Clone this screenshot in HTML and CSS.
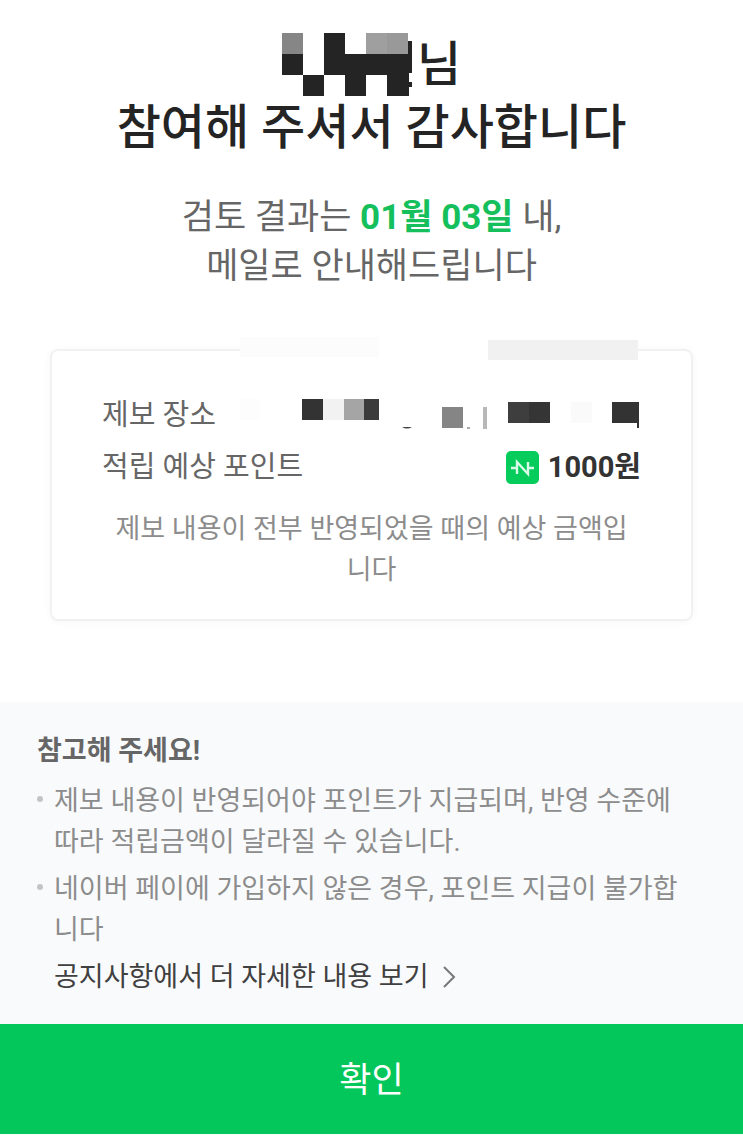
FILE: index.html
```html
<!DOCTYPE html>
<html lang="ko">
<head>
  <meta charset="UTF-8">
  <meta name="viewport" content="width=device-width, initial-scale=1">
  <title>참여해 주셔서 감사합니다</title>
  <link rel="stylesheet" href="styles.css">
</head>
<body>
  <main class="result">
    <h1 class="title">
      <span class="user">
        <svg class="user-mask" width="135" height="63" viewBox="0 0 135 63" shape-rendering="crispEdges" aria-hidden="true">
          <g fill="#242424">
            <path d="M0 21h21v21H0zM21 42h21v21H21zM42 0h21v21h64v42h-22V42H84v21H63V42H42z"/>
            <path d="M126 8h4v32h-4zM126 49h4v5h-4z"/>
          </g>
          <path d="M0 0h21v21H0z" fill="#868686"/>
          <path d="M84 0h21v21H84z" fill="#9f9f9f"/>
          <path d="M105 0h21v21h-21z" fill="#999"/>
        </svg>님
      </span>
      참여해 주셔서 감사합니다
    </h1>
    <p class="schedule">검토 결과는 <strong>01월 03일</strong> 내,<br>메일로 안내해드립니다</p>

    <section class="card">
      <dl class="summary">
        <div class="row">
          <dt>제보 장소</dt>
          <dd></dd>
        </div>
        <div class="row">
          <dt>적립 예상 포인트</dt>
          <dd class="point">
            <svg width="33" height="33" viewBox="0 0 33 33" aria-hidden="true">
              <rect width="33" height="33" rx="5" fill="#06cc5c"/>
              <path d="M5 17h6M22 17h6M11 23V11l11 12V11" fill="none" stroke="#d9fbe8" stroke-width="2.4"/>
            </svg>
            1000원
          </dd>
        </div>
      </dl>
      <p class="card-note">제보 내용이 전부 반영되었을 때의 예상 금액입니다</p>

      <!-- hidden place name -->
      <svg class="place-mask" width="400" height="93" viewBox="0 0 400 93" shape-rendering="crispEdges" aria-hidden="true">
        <path d="M139 8h109v10H139z" fill="#fff"/>
        <path d="M0 0h139v20H0z" fill="#fcfcfc"/>
        <path d="M248 3h150v20H248z" fill="#f1f1f1"/>
        <path d="M0 62h20v21H0z" fill="#fdfdfd"/>
        <path d="M331 65h21v21h-21z" fill="#fafafa"/>
        <path d="M62 62h21v21H62z" fill="#333"/>
        <path d="M83 62h21v21H83z" fill="#f2f2f2"/>
        <path d="M104 62h20v21h-20z" fill="#a5a5a5"/>
        <path d="M124 62h15v21h-15z" fill="#3b3b3b"/>
        <path d="M162 90q5 3 10 0z" fill="#444" shape-rendering="auto"/>
        <path d="M202 70h21v21h-21z" fill="#858585"/>
        <path d="M227 90h3v2h-3z" fill="#aaa"/>
        <path d="M243 70h4v22h-4z" fill="#b8b8b8"/>
        <path d="M268 65h21v21h-21z" fill="#3e3e3e"/>
        <path d="M289 65h21v21h-21z" fill="#353535"/>
        <path d="M372 65h27v26h-2v-5h-25z" fill="#333"/>
      </svg>
    </section>
  </main>

  <section class="notice">
    <h2>참고해 주세요!</h2>
    <ul>
      <li>제보 내용이 반영되어야 포인트가 지급되며, 반영 수준에 따라 적립금액이 달라질 수 있습니다.</li>
      <li>네이버 페이에 가입하지 않은 경우, 포인트 지급이 불가합니다</li>
    </ul>
    <a class="more" href="#">
      공지사항에서 더 자세한 내용 보기
      <svg width="14" height="24" viewBox="0 0 14 24" aria-hidden="true">
        <path d="M2 1l10 10L2 21" fill="none" stroke="#777" stroke-width="2"/>
      </svg>
    </a>
  </section>

  <button class="confirm" type="button">확인</button>
</body>
</html>
```

FILE: styles.css
```css
* {
  box-sizing: border-box;
}

body {
  margin: 0;
  font-family: Roboto, "Noto Sans CJK KR", sans-serif;
  font-size: 27px;
  line-height: 41px;
  color: #8c8c8c;
  background: #fff;
}

h1, h2, p, ul, dl, dd {
  margin: 0;
  padding: 0;
}

.result {
  padding: 33px 50px 81px;
}

.title {
  font-size: 48px;
  font-weight: 500;
  line-height: 63px;
  color: #242424;
  text-align: center;
}

.user {
  display: flex;
  justify-content: center;
}

.schedule {
  margin-top: 34px;
  font-size: 35px;
  line-height: 49px;
  color: #666;
  text-align: center;
}

.schedule strong {
  font-weight: 700;
  color: #14bf5c;
}

.card {
  position: relative;
  margin-top: 58px;
  padding: 38px 50px 28px;
  border: 2px solid #f1f1f1;
  border-radius: 8px;
  box-shadow: 0 1px 8px rgba(0, 0, 0, .04);
}

.summary {
  font-size: 29px;
  line-height: 52px;
  color: #666;
}

.row {
  display: flex;
  justify-content: space-between;
}

.point {
  display: flex;
  align-items: center;
  gap: 9px;
  font-weight: 700;
  color: #333;
}

.card-note {
  margin-top: 16px;
  padding: 0 10px;
  text-align: center;
}

.place-mask {
  position: absolute;
  top: -14px;
  right: 51px;
}

.notice {
  padding: 29px 37px 26px;
  background: #f9fafc;
}

.notice h2 {
  font-size: 27px;
  font-weight: 700;
  color: #666;
}

.notice ul {
  margin-top: 9px;
  list-style: none;
}

.notice li {
  position: relative;
  margin-bottom: 6px;
  padding: 0 16px 0 17px;
}

.notice li::before {
  content: "";
  position: absolute;
  top: 15px;
  left: 0;
  width: 6px;
  height: 6px;
  border-radius: 50%;
  background: #c4c4c4;
}

.more {
  display: inline-flex;
  align-items: center;
  gap: 13px;
  margin-left: 17px;
  color: #404040;
  text-decoration: none;
}

.confirm {
  display: block;
  width: 100%;
  padding: 31px 0 27px;
  border: 0;
  font-family: inherit;
  font-size: 35px;
  line-height: 52px;
  color: #fff;
  background: #03c75a;
  cursor: pointer;
}
```
